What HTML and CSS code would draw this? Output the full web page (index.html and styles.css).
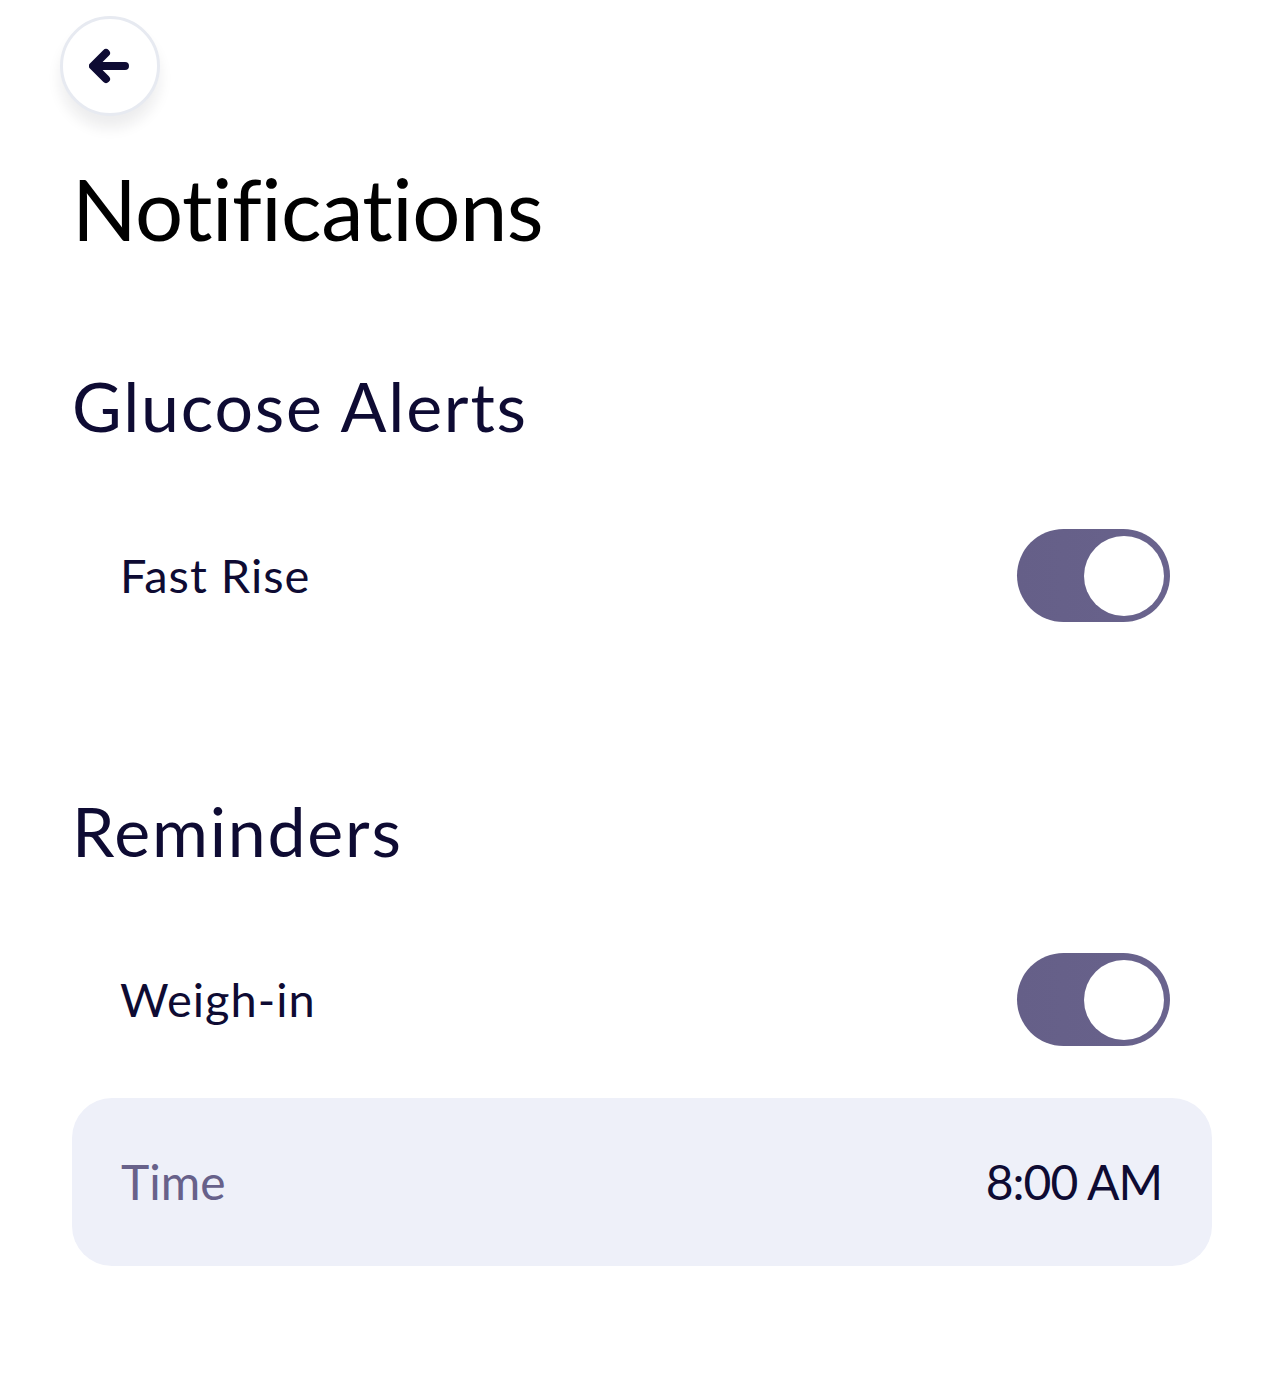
FILE: index.html
```html
<!DOCTYPE html>
<html lang="en">
<head>
<meta charset="utf-8">
<title>Notifications</title>
<link rel="stylesheet" href="styles.css">
</head>
<body>
<div class="page">
  <button class="back" aria-label="Back">
    <svg width="40" height="40" viewBox="0 0 40 40" aria-hidden="true">
      <path d="M36 20 H5 M17 7 L4 20 L17 33" fill="none" stroke="#0e0b33" stroke-width="8" stroke-linecap="round" stroke-linejoin="round"/>
    </svg>
  </button>
  <h1 class="title">Notifications</h1>

  <h2 class="section glucose">Glucose Alerts</h2>
  <div class="row first">
    <span class="label">Fast Rise</span>
    <span class="toggle on"><span class="knob"></span></span>
  </div>

  <h2 class="section reminders">Reminders</h2>
  <div class="row second">
    <span class="label">Weigh-in</span>
    <span class="toggle on"><span class="knob"></span></span>
  </div>
  <div class="card">
    <span class="card-label">Time</span>
    <span class="card-value">8:00 AM</span>
  </div>
</div>
</body>
</html>
```

FILE: styles.css
```css
* { box-sizing: border-box; }
html, body { margin: 0; padding: 0; background: #ffffff; }
body {
  font-family: Lato, "Open Sans", "Liberation Sans", sans-serif;
  color: #0e0b33;
  font-variant-ligatures: none;
}
.page {
  padding: 16px 72px 0 72px;
  width: 1284px;
  height: 1391px;
}
.back {
  display: flex;
  align-items: center;
  justify-content: center;
  width: 100px;
  height: 100px;
  margin-left: -12px;
  padding: 0;
  border-radius: 50%;
  border: 3px solid #e7eaf1;
  background: #ffffff;
  box-shadow: 0 12px 14px rgba(20, 20, 40, 0.08);
}
.back svg { display: block; margin-left: -2px; }
.title {
  margin: 41px 0 0 0;
  font-size: 85px;
  line-height: 1.2;
  font-weight: 400;
  color: #000000;
  letter-spacing: -0.5px;
}
.section {
  margin: 0;
  font-size: 68px;
  line-height: 1.2;
  font-weight: 400;
  color: #0e0b33;
  letter-spacing: 1.8px;
}
.glucose { margin-top: 106px; }
.reminders { margin-top: 168px; }
.row {
  display: flex;
  align-items: center;
  justify-content: space-between;
  height: 93px;
  padding: 0 42px 0 48px;
  margin-top: 82px;
}
.label {
  font-size: 47px;
  line-height: 1.2;
  color: #0e0b33;
  letter-spacing: 1px;
}
.toggle {
  position: relative;
  display: block;
  width: 153px;
  height: 93px;
  border-radius: 47px;
  background: linear-gradient(90deg, #655f88 0%, #67618a 60%, #6a648e 100%);
}
.knob {
  position: absolute;
  top: 7px;
  right: 6px;
  width: 80px;
  height: 80px;
  border-radius: 50%;
  background: #ffffff;
}
.card {
  display: flex;
  align-items: center;
  justify-content: space-between;
  height: 168px;
  margin-top: 52px;
  padding: 0 50px 0 49px;
  border-radius: 40px;
  background: #eef0f9;
}
.card-label {
  font-size: 48px;
  line-height: 1.2;
  color: #67618a;
}
.card-value {
  font-size: 48px;
  line-height: 1.2;
  color: #0e0b33;
  letter-spacing: -1px;
}
```
